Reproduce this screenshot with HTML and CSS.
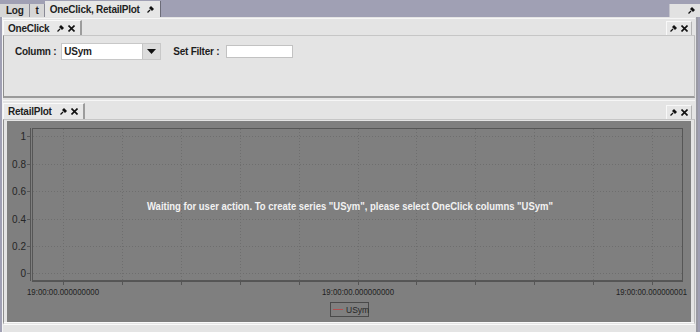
FILE: index.html
```html
<!DOCTYPE html>
<html lang="en">
<head>
    <meta charset="UTF-8">
    <title>OneClick, RetailPlot</title>
    <link rel="stylesheet" href="styles.css">
</head>
<body>
    <div class="topbar">
        <div class="tab">Log</div>
        <div class="tab">t</div>
        <div class="tab active">OneClick, RetailPlot
            <svg class="pin" width="7" height="7" viewBox="0 0 7 7"><path d="M4 0 L7 3 L5 5 L2 2 Z" fill="#111"/><path d="M3 4 L0.5 6.5" stroke="#111" stroke-width="1.3"/></svg>
        </div>
        <div class="spacer"></div>
        <div class="corner-btn">
            <svg class="pin" width="7" height="7" viewBox="0 0 7 7"><path d="M4 0 L7 3 L5 5 L2 2 Z" fill="#111"/><path d="M3 4 L0.5 6.5" stroke="#111" stroke-width="1.3"/></svg>
        </div>
    </div>

    <div class="workspace">
        <!-- OneClick panel -->
        <div class="dock dock-oneclick">
            <div class="dock-head">
                <div class="dock-tab">OneClick
                    <svg class="pin" width="7" height="7" viewBox="0 0 7 7"><path d="M4 0 L7 3 L5 5 L2 2 Z" fill="#111"/><path d="M3 4 L0.5 6.5" stroke="#111" stroke-width="1.3"/></svg>
                    <svg class="close" width="7" height="7" viewBox="0 0 7 7"><path d="M0.5 0.5 L6.5 6.5 M6.5 0.5 L0.5 6.5" stroke="#111" stroke-width="1.6"/></svg>
                </div>
                <div class="dock-btns">
                    <svg class="pin" width="7" height="7" viewBox="0 0 7 7"><path d="M4 0 L7 3 L5 5 L2 2 Z" fill="#111"/><path d="M3 4 L0.5 6.5" stroke="#111" stroke-width="1.3"/></svg>
                    <svg class="close" width="7" height="7" viewBox="0 0 7 7"><path d="M0.5 0.5 L6.5 6.5 M6.5 0.5 L0.5 6.5" stroke="#111" stroke-width="1.6"/></svg>
                </div>
            </div>
            <div class="dock-body form-body">
                <span class="field-label">Column :</span>
                <div class="combo">
                    <span class="combo-value">USym</span>
                    <span class="combo-arrow"><svg width="9" height="5" viewBox="0 0 9 5"><path d="M0 0 L9 0 L4.5 5 Z" fill="#111"/></svg></span>
                </div>
                <span class="field-label filter-label">Set Filter :</span>
                <input class="filter" type="text">
            </div>
        </div>

        <!-- RetailPlot panel -->
        <div class="dock dock-plot">
            <div class="dock-head">
                <div class="dock-tab">RetailPlot
                    <svg class="pin" width="7" height="7" viewBox="0 0 7 7"><path d="M4 0 L7 3 L5 5 L2 2 Z" fill="#111"/><path d="M3 4 L0.5 6.5" stroke="#111" stroke-width="1.3"/></svg>
                    <svg class="close" width="7" height="7" viewBox="0 0 7 7"><path d="M0.5 0.5 L6.5 6.5 M6.5 0.5 L0.5 6.5" stroke="#111" stroke-width="1.6"/></svg>
                </div>
                <div class="dock-btns">
                    <svg class="pin" width="7" height="7" viewBox="0 0 7 7"><path d="M4 0 L7 3 L5 5 L2 2 Z" fill="#111"/><path d="M3 4 L0.5 6.5" stroke="#111" stroke-width="1.3"/></svg>
                    <svg class="close" width="7" height="7" viewBox="0 0 7 7"><path d="M0.5 0.5 L6.5 6.5 M6.5 0.5 L0.5 6.5" stroke="#111" stroke-width="1.6"/></svg>
                </div>
            </div>
            <div class="dock-body plot-body">
                <svg class="chart" width="684" height="201" viewBox="0 0 684 201">
                    <g class="grid">
                        <line x1="26" y1="15.5" x2="676" y2="15.5"/>
                        <line x1="26" y1="43.5" x2="676" y2="43.5"/>
                        <line x1="26" y1="70.5" x2="676" y2="70.5"/>
                        <line x1="26" y1="98.5" x2="676" y2="98.5"/>
                        <line x1="26" y1="125.5" x2="676" y2="125.5"/>
                        <line x1="26" y1="152.5" x2="676" y2="152.5"/>
                        <line x1="56.5" y1="8" x2="56.5" y2="160"/>
                        <line x1="115.5" y1="8" x2="115.5" y2="160"/>
                        <line x1="174.5" y1="8" x2="174.5" y2="160"/>
                        <line x1="233.5" y1="8" x2="233.5" y2="160"/>
                        <line x1="292.5" y1="8" x2="292.5" y2="160"/>
                        <line x1="351.5" y1="8" x2="351.5" y2="160"/>
                        <line x1="409.5" y1="8" x2="409.5" y2="160"/>
                        <line x1="468.5" y1="8" x2="468.5" y2="160"/>
                        <line x1="527.5" y1="8" x2="527.5" y2="160"/>
                        <line x1="586.5" y1="8" x2="586.5" y2="160"/>
                        <line x1="645.5" y1="8" x2="645.5" y2="160"/>
                    </g>
                    <rect class="frame" x="25.5" y="7.5" width="650" height="152"/>
                    <g class="axis">
                        <line x1="23.5" y1="7" x2="23.5" y2="160"/>
                        <line x1="25" y1="160.5" x2="676" y2="160.5"/>
                        <line x1="20" y1="15.5" x2="23" y2="15.5"/>
                        <line x1="20" y1="43.5" x2="23" y2="43.5"/>
                        <line x1="20" y1="70.5" x2="23" y2="70.5"/>
                        <line x1="20" y1="98.5" x2="23" y2="98.5"/>
                        <line x1="20" y1="125.5" x2="23" y2="125.5"/>
                        <line x1="20" y1="152.5" x2="23" y2="152.5"/>
                        <line x1="56.5" y1="161" x2="56.5" y2="164"/>
                        <line x1="115.5" y1="161" x2="115.5" y2="164"/>
                        <line x1="174.5" y1="161" x2="174.5" y2="164"/>
                        <line x1="233.5" y1="161" x2="233.5" y2="164"/>
                        <line x1="292.5" y1="161" x2="292.5" y2="164"/>
                        <line x1="351.5" y1="161" x2="351.5" y2="164"/>
                        <line x1="409.5" y1="161" x2="409.5" y2="164"/>
                        <line x1="468.5" y1="161" x2="468.5" y2="164"/>
                        <line x1="527.5" y1="161" x2="527.5" y2="164"/>
                        <line x1="586.5" y1="161" x2="586.5" y2="164"/>
                        <line x1="645.5" y1="161" x2="645.5" y2="164"/>
                    </g>
                    <g class="y-labels">
                        <text x="19" y="19">1</text>
                        <text x="19" y="47">0.8</text>
                        <text x="19" y="74">0.6</text>
                        <text x="19" y="102">0.4</text>
                        <text x="19" y="129">0.2</text>
                        <text x="19" y="156">0</text>
                    </g>
                    <g class="x-labels">
                        <text x="20" y="173.5" textLength="72" lengthAdjust="spacingAndGlyphs">19:00:00.000000000</text>
                        <text x="315" y="173.5" textLength="72" lengthAdjust="spacingAndGlyphs">19:00:00.000000000</text>
                        <text x="609" y="173.5" textLength="71" lengthAdjust="spacingAndGlyphs">19:00:00.000000001</text>
                    </g>
                    <text class="message" x="140" y="89" textLength="406" lengthAdjust="spacingAndGlyphs">Waiting for user action. To create series "USym", please select OneClick columns "USym"</text>
                    <rect class="legend" x="323.5" y="181.5" width="38" height="14"/>
                    <line x1="326" y1="188.5" x2="336" y2="188.5" stroke="#b05050" stroke-width="1"/>
                    <text class="legend-text" x="339" y="191.5">USym</text>
                </svg>
            </div>
        </div>
    </div>
</body>
</html>
```

FILE: styles.css
```css
html, body {
    margin: 0;
    padding: 0;
}

body {
    width: 700px;
    height: 332px;
    overflow: hidden;
    background-color: #a0a0b4;
    font-family: "Liberation Sans", Arial, sans-serif;
    font-size: 10px;
    font-weight: bold;
    letter-spacing: -0.25px;
    color: #1e1e1e;
}

/* top tab strip */
.topbar {
    display: flex;
    align-items: flex-end;
    height: 17px;
}

.tab {
    height: 13px;
    line-height: 13px;
    padding: 0 5px 0 6px;
    background-color: #d6d6d6;
    border-right: 1px solid #8a8a96;
    box-sizing: border-box;
}

.tab.active {
    height: 16px;
    line-height: 15px;
    padding: 0 6px 0 5px;
    background-color: #e6e6e6;
    border-right: 1px solid #6c6c78;
    display: flex;
    align-items: center;
    gap: 7px;
}

.spacer {
    flex: 1;
}

.corner-btn {
    width: 31px;
    height: 13px;
    background-color: #e2e2e2;
    border-left: 1px solid #c4c4cc;
    display: flex;
    align-items: center;
    justify-content: flex-end;
    padding-right: 5px;
    box-sizing: border-box;
}

/* main area */
.workspace {
    height: 315px;
    margin: 0 2px;
    background-color: #e4e4e4;
    border-left: 1px solid #f4f4f4;
    border-right: 2px solid #9a9aa4;
    box-sizing: border-box;
    display: flex;
    flex-direction: column;
    padding: 1px 1px 0 0;
}

.dock {
    display: flex;
    flex-direction: column;
    border-top: 1px solid #f6f6f6;
}

.dock-head {
    display: flex;
    align-items: flex-end;
    justify-content: space-between;
    height: 16px;
}

.dock-tab {
    height: 15px;
    display: flex;
    align-items: center;
    gap: 4px;
    padding: 0 5px 0 4px;
    background-color: #e8e8e8;
    border-top: 1px solid #fafafa;
    border-left: 1px solid #f8f8f8;
    border-right: 2px solid #9c9c9c;
    box-sizing: border-box;
}

.dock-tab .pin {
    margin-left: 4px;
}

.dock-btns {
    height: 14px;
    width: 26px;
    display: flex;
    align-items: center;
    justify-content: center;
    gap: 4px;
    margin-right: 3px;
    background-color: #e6e6e6;
    border: 1px solid #f8f8f8;
    border-bottom: none;
    border-right: 1px solid #b4b4b4;
    box-sizing: border-box;
}

.dock-body {
    border-top: 1px solid #c6c6c6;
    border-left: 1px solid #8e8e8e;
    border-bottom: 2px solid #9a9a9a;
    border-right: 1px solid #bcbcbc;
    box-sizing: border-box;
}

.dock-oneclick .dock-body {
    height: 63px;
}

/* OneClick form */
.form-body {
    display: flex;
    align-items: flex-start;
    padding: 7px 0 0 11px;
}

.field-label {
    line-height: 17px;
    margin-right: 5px;
}

.filter-label {
    margin-left: 12px;
    margin-right: 7px;
}

.combo {
    display: flex;
    width: 100px;
    height: 17px;
    border: 1px solid #c8c8c8;
    background-color: #fff;
    box-sizing: border-box;
}

.combo-value {
    flex: 1;
    line-height: 15px;
    padding-left: 2px;
}

.combo-arrow {
    width: 17px;
    display: flex;
    align-items: center;
    justify-content: center;
    background-color: #dcdcdc;
    border-left: 1px solid #c4c4c4;
}

.filter {
    width: 67px;
    height: 13px;
    margin: 2px 0 0 0;
    padding: 0;
    border: 1px solid #c2c2c2;
    background-color: #fff;
    box-sizing: border-box;
}

/* RetailPlot */
.dock-plot {
    margin-top: 2px;
}

.dock-plot .dock-head {
    height: 18px;
}

.dock-plot .dock-tab {
    height: 16px;
}

.plot-body {
    height: 206px;
    padding: 1px 0 0 3px;
    border-bottom: 3px double #fafafa;
}

.chart {
    display: block;
    background-color: #7f7f7f;
}

.grid line {
    stroke: #6e6e6e;
    stroke-width: 1;
    stroke-dasharray: 1 2;
}

.frame {
    fill: none;
    stroke: #565656;
    stroke-width: 1;
}

.axis line {
    stroke: #555;
    stroke-width: 1;
}

.y-labels text {
    font-family: "Liberation Sans", Arial, sans-serif;
    font-weight: normal;
    font-size: 10px;
    fill: #262626;
    text-anchor: end;
    letter-spacing: 0;
}

.x-labels text {
    font-family: "Liberation Sans", Arial, sans-serif;
    font-weight: normal;
    font-size: 9.5px;
    fill: #222;
    letter-spacing: 0;
}

.message {
    font-family: "Liberation Sans", Arial, sans-serif;
    font-weight: bold;
    font-size: 10.5px;
    fill: #f2f2f2;
    letter-spacing: 0;
}

.legend {
    fill: none;
    stroke: #4a4a4a;
    stroke-width: 1;
}

.legend-text {
    font-family: "Liberation Sans", Arial, sans-serif;
    font-weight: normal;
    font-size: 8.5px;
    fill: #262626;
    letter-spacing: 0;
}
```
